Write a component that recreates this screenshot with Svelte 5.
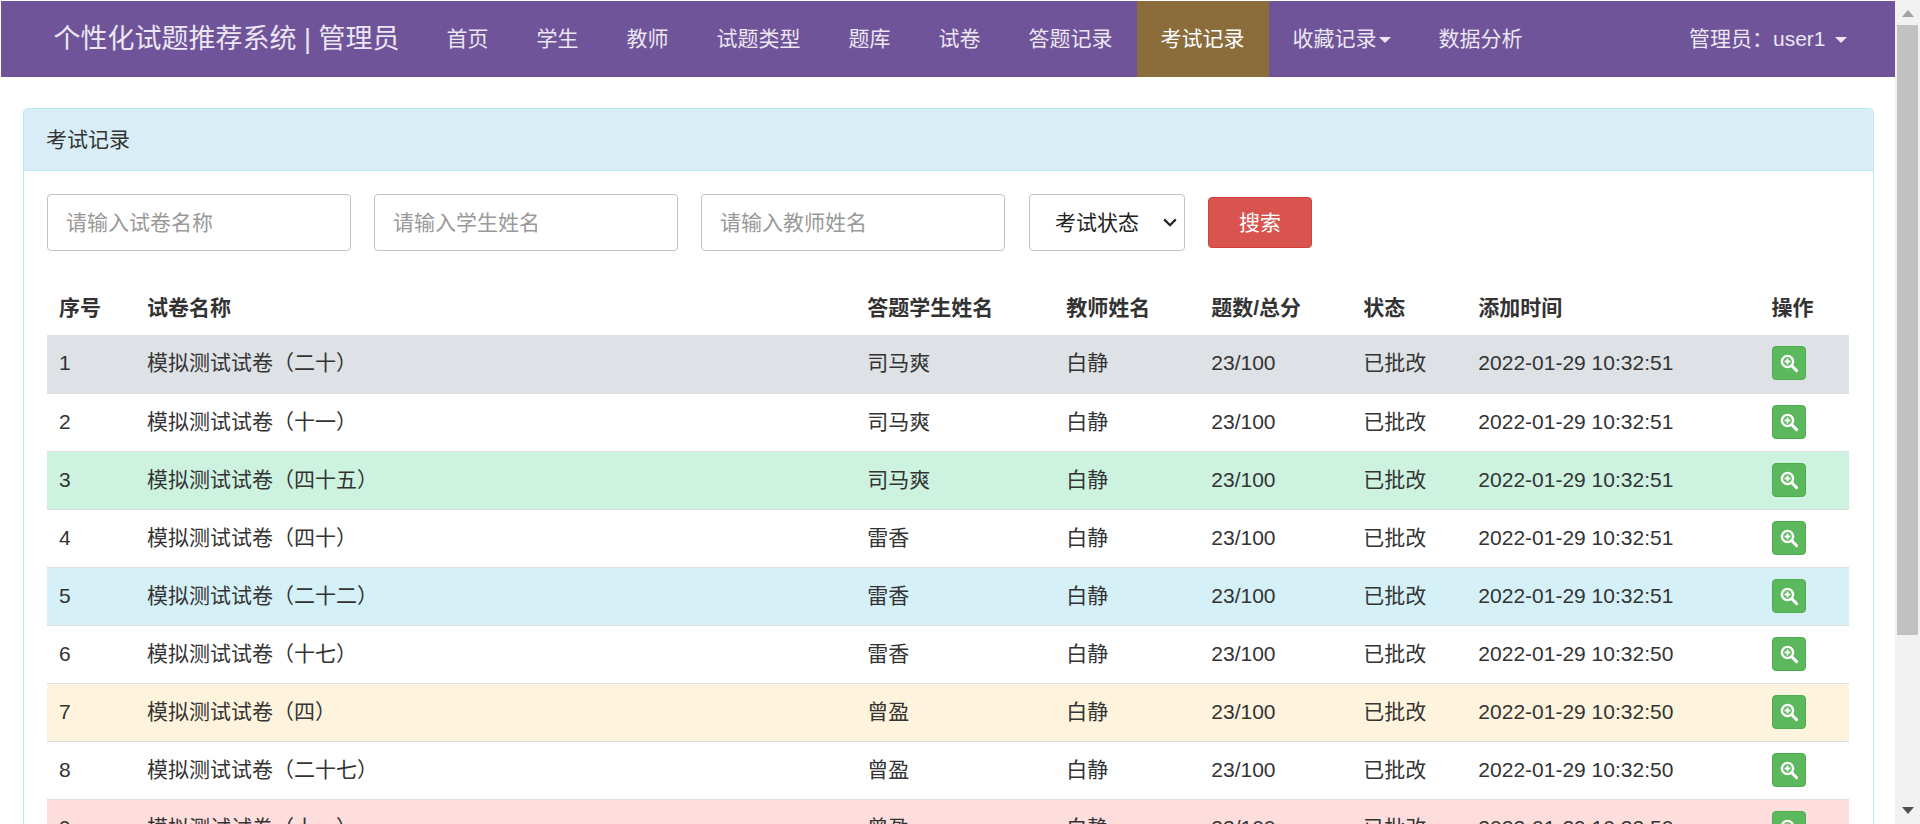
<script>
  const rows = [
    ['模拟测试试卷（二十）','司马爽','2022-01-29 10:32:51','grey'],
    ['模拟测试试卷（十一）','司马爽','2022-01-29 10:32:51',''],
    ['模拟测试试卷（四十五）','司马爽','2022-01-29 10:32:51','green'],
    ['模拟测试试卷（四十）','雷香','2022-01-29 10:32:51',''],
    ['模拟测试试卷（二十二）','雷香','2022-01-29 10:32:51','blue'],
    ['模拟测试试卷（十七）','雷香','2022-01-29 10:32:50',''],
    ['模拟测试试卷（四）','曾盈','2022-01-29 10:32:50','yellow'],
    ['模拟测试试卷（二十七）','曾盈','2022-01-29 10:32:50',''],
    ['模拟测试试卷（十一）','曾盈','2022-01-29 10:32:50','red'],
  ];
  const links = ['首页','学生','教师','试题类型','题库','试卷','答题记录','考试记录','收藏记录','数据分析'];
  const widths = [88,720,199,145,152,115,293,89];
</script>

<div class="page">
  <div class="main">
    <nav class="nav">
      <span class="brand">个性化试题推荐系统 | 管理员</span>
      <ul class="links">
        {#each links as l}
          <li class:active={l === '考试记录'}>{l}{#if l === '收藏记录'}<i class="caret small"></i>{/if}</li>
        {/each}
      </ul>
      <div class="user">管理员：user1<i class="caret"></i></div>
    </nav>

    <section class="panel">
      <header class="panel-head">考试记录</header>
      <div class="panel-body">
        <form class="filters">
          <input placeholder="请输入试卷名称" />
          <input placeholder="请输入学生姓名" />
          <input placeholder="请输入教师姓名" />
          <span class="select-wrap">
            <select><option>考试状态</option></select>
            <svg class="chevron" viewBox="0 0 14 9" width="14" height="9"><path d="M1.2 1.4 L7 7.2 L12.8 1.4" fill="none" stroke="#222" stroke-width="2.2"/></svg>
          </span>
          <button type="button" class="search">搜索</button>
        </form>
        <table>
          <colgroup>{#each widths as w}<col style="width:{w}px" />{/each}</colgroup>
          <thead>
            <tr><th>序号</th><th>试卷名称</th><th>答题学生姓名</th><th>教师姓名</th><th>题数/总分</th><th>状态</th><th>添加时间</th><th>操作</th></tr>
          </thead>
          <tbody>
            {#each rows as r, i}
              <tr class={r[3]}>
                <td>{i + 1}</td><td>{r[0]}</td><td>{r[1]}</td><td>白静</td><td>23/100</td><td>已批改</td><td>{r[2]}</td>
                <td>
                  <button type="button" class="view" aria-label="查看">
                    <svg viewBox="0 0 20 20" width="20" height="20">
                      <circle cx="8.5" cy="8.5" r="5.6" fill="none" stroke="#fff" stroke-width="2.4"/>
                      <path d="M12.8 12.8 L17.6 17.6" stroke="#fff" stroke-width="3" stroke-linecap="round"/>
                      <path d="M8.5 5.6 V11.4 M5.6 8.5 H11.4" stroke="#fff" stroke-width="1.8"/>
                    </svg>
                  </button>
                </td>
              </tr>
            {/each}
          </tbody>
        </table>
      </div>
    </section>
  </div>
  <aside class="scrollbar">
    <span class="arrow up"></span>
    <span class="track"><span class="thumb"></span></span>
    <span class="arrow down"></span>
  </aside>
</div>

<style>
  :global(body) { margin: 0; background: #fff; overflow: hidden; }
  .page {
    display: flex; height: 824px; overflow: hidden;
    font-family: "Liberation Sans", "Noto Sans CJK SC", sans-serif;
    font-size: 21px; line-height: 30px; color: #333;
  }
  .main { flex: 1; min-width: 0; padding: 1px 0 0 1px; overflow: hidden; }
  .nav {
    display: flex; align-items: stretch; height: 76px; background: #6f5499; color: #ebe6f2;
    padding-left: 52.5px; box-sizing: border-box;
  }
  .brand { font-size: 27px; line-height: 76px; white-space: nowrap; margin-right: 23px; }
  .links { display: flex; list-style: none; margin: 0; padding: 0; }
  .links li { padding: 0 24px; line-height: 76px; white-space: nowrap; }
  .links li.active { background: #8a6d3b; color: #fff; }
  .caret {
    display: inline-block; width: 0; height: 0; margin-left: 9.5px; vertical-align: middle;
    border-top: 6px solid currentColor; border-left: 6px solid transparent; border-right: 6px solid transparent;
  }
  .caret.small { margin-left: 2px; border-width: 6px 6px 0; }
  .user { margin-left: auto; padding-right: 48px; line-height: 76px; white-space: nowrap; }
  .panel {
    margin: 31px 21px 0 22px; border: 1px solid #bce8f1; border-bottom: 0; border-radius: 5px 5px 0 0;
  }
  .panel-head {
    height: 62px; line-height: 61px; padding: 0 22px; background: #d9edf7; box-sizing: border-box;
    border-bottom: 1px solid #bce8f1; border-radius: 4px 4px 0 0;
  }
  .panel-body { padding: 23px 24.5px 0 23px; }
  .filters { display: flex; align-items: center; gap: 23px; height: 57px; margin-bottom: 31px; }
  input, select {
    box-sizing: border-box; height: 57px; border: 1px solid #cbbfc2; border-radius: 4px;
    background: #fff; font: inherit; color: #333; outline: none;
  }
  input { width: 304px; padding: 0 18px; }
  input::placeholder { color: #999; opacity: 1; }
  .select-wrap { position: relative; display: block; width: 156px; height: 57px; margin-left: 1px; }
  select { width: 156px; padding: 0 0 0 25px; color: #222; appearance: none; }
  .chevron { position: absolute; right: 8px; top: 24px; pointer-events: none; }
  .search {
    width: 104px; height: 51px; background: #d9534f; border: 1px solid #d43f3a; border-radius: 4px;
    color: #fff; font: inherit; font-size: 21px; padding: 0;
  }
  table { width: 100%; table-layout: fixed; border-collapse: collapse; }
  th, td { padding: 0 12px; text-align: left; white-space: nowrap; overflow: hidden; }
  th { font-weight: 700; height: 53px; padding-bottom: 1px; box-sizing: border-box; vertical-align: middle; color: #333; }
  td { height: 58px; box-sizing: border-box; border-top: 1px solid #ddd; vertical-align: middle; padding-bottom: 1px; }
  tr.grey td { background: #dee1e5; }
  tr.green td { background: #cdf3e0; }
  tr.blue td { background: #d6f0f7; }
  tr.yellow td { background: #fef3dc; }
  tr.red td { background: #fedddd; }
  tbody tr:first-child td { border-top: 0; }
  .view {
    display: flex; align-items: center; justify-content: center; width: 34px; height: 34px; padding: 0; margin-left: 1px;
    background: #5cb85c; border: 1px solid #4cae4c; border-radius: 4px;
  }
  .scrollbar { flex: 0 0 25px; display: flex; flex-direction: column; align-items: center; background: #f1f1f1; }
  .arrow { width: 0; height: 0; border-left: 6px solid transparent; border-right: 6px solid transparent; }
  .arrow.up { margin: 10px 0 8px; border-bottom: 7px solid #a3a3a3; }
  .arrow.down { margin: 6px 0 10px; border-top: 7px solid #505050; }
  .track { flex: 1; width: 100%; display: block; }
  .thumb { display: block; width: 21px; height: 610px; margin: 0 auto; background: #c1c1c1; }
</style>
